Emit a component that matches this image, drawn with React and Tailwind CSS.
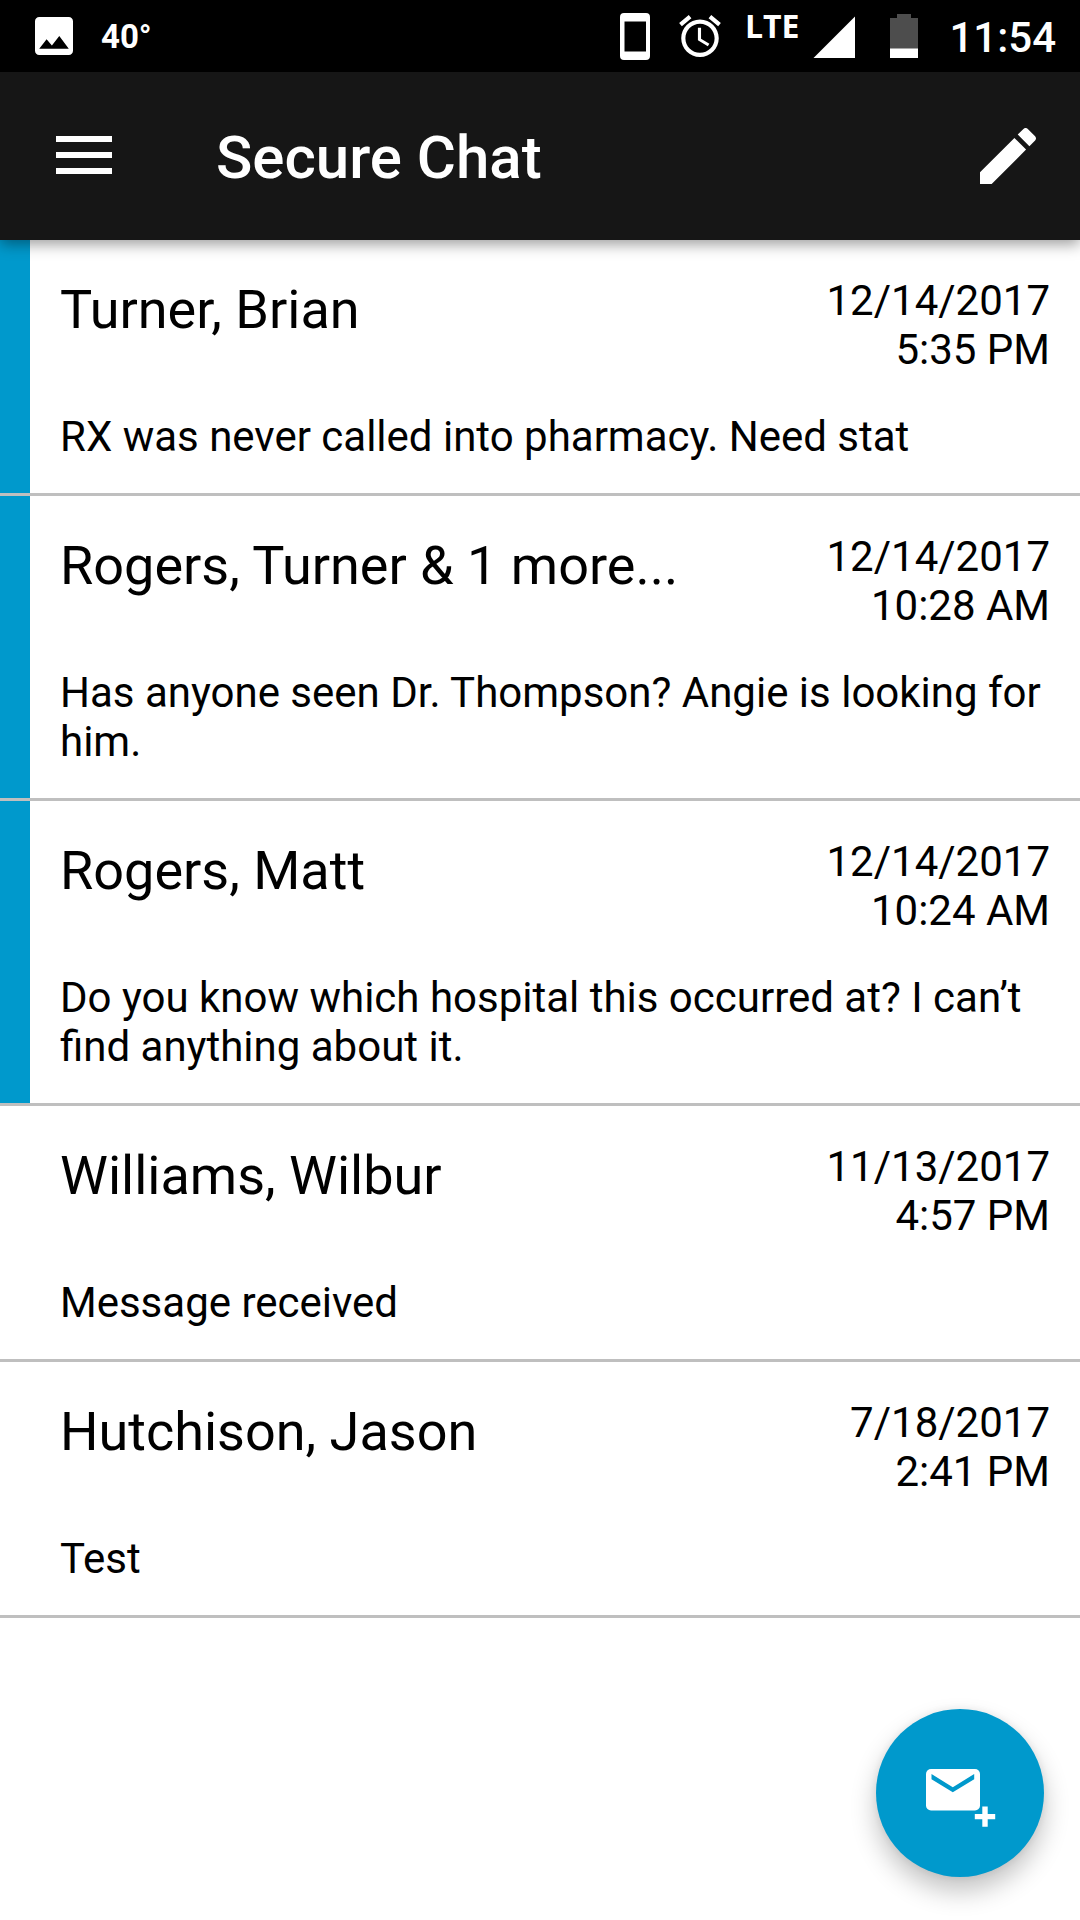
const conversations = [
  {
    id: 1,
    name: "Turner, Brian",
    date: "12/14/2017",
    time: "5:35 PM",
    preview: "RX was never called into pharmacy. Need stat",
    unread: true,
  },
  {
    id: 2,
    name: "Rogers, Turner & 1 more...",
    date: "12/14/2017",
    time: "10:28 AM",
    preview: "Has anyone seen Dr. Thompson? Angie is looking for him.",
    unread: true,
  },
  {
    id: 3,
    name: "Rogers, Matt",
    date: "12/14/2017",
    time: "10:24 AM",
    preview: "Do you know which hospital this occurred at? I can’t find anything about it.",
    unread: true,
  },
  {
    id: 4,
    name: "Williams, Wilbur",
    date: "11/13/2017",
    time: "4:57 PM",
    preview: "Message received",
    unread: false,
  },
  {
    id: 5,
    name: "Hutchison, Jason",
    date: "7/18/2017",
    time: "2:41 PM",
    preview: "Test",
    unread: false,
  },
];

function PhotoIcon() {
  return (
    <svg viewBox="3 3 18 18" className="h-[38px] w-[38px]" fill="currentColor" aria-hidden="true">
      <path d="M21 19V5c0-1.1-.9-2-2-2H5c-1.1 0-2 .9-2 2v14c0 1.1.9 2 2 2h14c1.1 0 2-.9 2-2zM8.5 13.5l2.5 3.01L14.5 12l4.5 6H5l3.5-4.5z" />
    </svg>
  );
}

function PhoneIcon() {
  return (
    <svg viewBox="0 0 30 47" className="h-[47px] w-[30px]" fill="currentColor" fillRule="evenodd" aria-hidden="true">
      <path d="M4 0h22a4 4 0 0 1 4 4v39a4 4 0 0 1-4 4H4a4 4 0 0 1-4-4V4a4 4 0 0 1 4-4zM4.500 8.500v30h21.500v-30z" />
    </svg>
  );
}

function AlarmIcon() {
  return (
    <svg viewBox="2 1.860 20 20.140" className="h-[42px] w-[42px]" fill="currentColor" aria-hidden="true">
      <path d="M22 5.720l-4.600-3.860-1.290 1.530 4.600 3.860L22 5.720zM7.880 3.390L6.600 1.860 2 5.710l1.290 1.530 4.590-3.850zM12.500 8H11v6l4.750 2.850.75-1.230-4-2.370V8zM12 4c-4.970 0-9 4.030-9 9s4.020 9 9 9c4.970 0 9-4.030 9-9s-4.030-9-9-9zm0 16c-3.870 0-7-3.130-7-7s3.130-7 7-7 7 3.130 7 7-3.130 7-7 7z" />
    </svg>
  );
}

function SignalIcon() {
  return (
    <svg viewBox="0 0 42 44" className="h-11 w-[42px]" fill="currentColor" aria-hidden="true">
      <path d="M0 44.500L42 2.500v42z" />
    </svg>
  );
}

function BatteryIcon() {
  return (
    <svg viewBox="0 0 28 44" className="h-[44px] w-[28px]" aria-hidden="true">
      <path d="M7 0h14v4h7v31H0V4h7z" fill="#4d4d4d" />
      <path d="M0 34.500h28V44H0z" fill="#fff" />
    </svg>
  );
}

function StatusBar() {
  return (
    <div className="flex h-[72px] items-center justify-between bg-black pr-6 pl-[35px] text-white">
      <div className="flex items-center gap-7">
        <PhotoIcon />
        <span className="text-[33px] leading-none font-bold">40°</span>
      </div>
      <div className="flex items-center">
        <div className="flex items-center gap-[29px]">
          <PhoneIcon />
          <AlarmIcon />
        </div>
        <div className="ml-6 flex items-start gap-3.5">
          <span className="font-['Open_Sans',sans-serif] text-[32px] leading-6 font-bold">LTE</span>
          <SignalIcon />
        </div>
        <div className="ml-[35px] flex items-center gap-[31px]">
          <BatteryIcon />
          <span className="pt-1 text-[42px] leading-none font-medium">11:54</span>
        </div>
      </div>
    </div>
  );
}

function AppBar() {
  return (
    <header className="relative z-10 flex h-[168px] items-center bg-[#161616] pr-11 pl-14 text-white shadow-[0_4px_14px_rgba(0,0,0,0.4)]">
      <button type="button" aria-label="Open menu">
        <svg viewBox="0 0 56 40" className="h-10 w-14" fill="currentColor" aria-hidden="true">
          <path d="M0 0h56v6H0zM0 16h56v6H0zM0 32h56v6H0z" />
        </svg>
      </button>
      <h1 className="ml-[104px] flex-1 pt-1 text-[60px] leading-[70px] font-medium">Secure Chat</h1>
      <button type="button" aria-label="Edit">
        <svg viewBox="3 3 18 18" className="h-14 w-14" fill="currentColor" aria-hidden="true">
          <path d="M3 17.250V21h3.750L17.810 9.940l-3.750-3.750L3 17.250zM20.710 7.040c.39-.39.39-1.020 0-1.410l-2.340-2.340c-.39-.39-1.020-.39-1.410 0l-1.830 1.830 3.750 3.750 1.830-1.830z" />
        </svg>
      </button>
    </header>
  );
}

function ConversationRow({ conversation }) {
  const { name, date, time, preview, unread } = conversation;

  return (
    <li className="border-b-[3px] border-[#bfbfbf]">
      <button type="button" className="flex w-full text-left">
        <span className={unread ? "w-[30px] shrink-0 self-stretch bg-[#0099cc]" : "w-[30px] shrink-0"} />
        <span className="flex min-w-0 flex-1 flex-col gap-[38px] px-[30px] pt-9 pb-8">
          <span className="flex items-start justify-between">
            <span className="truncate text-[54px] leading-[68px]">{name}</span>
            <span className="flex shrink-0 flex-col text-right text-[42px] leading-[49px]">
              <span>{date}</span>
              <span>{time}</span>
            </span>
          </span>
          <span className="text-[42px] leading-[49px]">{preview}</span>
        </span>
      </button>
    </li>
  );
}

function ComposeButton() {
  return (
    <button
      type="button"
      aria-label="New message"
      className="fixed right-9 bottom-[43px] flex h-[168px] w-[168px] items-center justify-center rounded-full bg-[#0099cc] text-white shadow-[0_14px_26px_rgba(0,0,0,0.24),0_0_10px_rgba(0,0,0,0.08)]"
    >
      <svg viewBox="0 0 72 72" className="h-[72px] w-[72px]" aria-hidden="true">
        <rect x="2" y="12" width="54" height="41.500" rx="5" fill="currentColor" />
        <path d="M7.500 17l21.300 13.300L50.200 17v5.200L28.800 35.200 7.500 22.200z" fill="#0099cc" />
        <path d="M58.300 49.500h5.400v7.500h7.500v5.300h-7.500v7.500h-5.400v-7.500h-7.500V57h7.500z" fill="currentColor" />
      </svg>
    </button>
  );
}

export default function App() {
  return (
    <div className="min-h-screen bg-white font-[Roboto,sans-serif] text-black">
      <StatusBar />
      <AppBar />
      <main>
        <ul>
          {conversations.map((c) => (
            <ConversationRow key={c.id} conversation={c} />
          ))}
        </ul>
      </main>
      <ComposeButton />
    </div>
  );
}
